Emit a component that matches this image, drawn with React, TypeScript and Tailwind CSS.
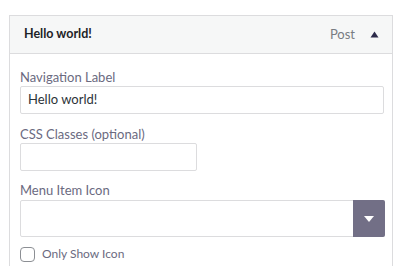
import React from "react";

export default function App() {
  return (
    <div className="w-[400px] h-[266px] bg-white overflow-hidden pt-[15px] pl-[9px]" style={{ fontFamily: "Lato, 'Noto Sans', sans-serif" }}>
      <div className="w-[384px] border border-[#dcdcde] border-b-0">
        <div className="h-[38px] bg-[#f6f7f7] border-b border-[#dcdcde] flex items-center pl-[14px] pr-[12px]">
          <span className="text-[12.5px] font-bold text-[#1d2327]">Hello world!</span>
          <span className="ml-auto text-[13px] text-[#787c82]">Post</span>
          <svg width="9" height="7" viewBox="0 0 9 7" className="ml-[15px] mr-[1px]">
            <path d="M4.5 0.5 L8.5 6.5 L0.5 6.5 Z" fill="#2c2a4a" />
          </svg>
        </div>
        <div className="pl-[10px] pr-[8px] pt-[15px] pb-[4px] flex flex-col">
          <label className="text-[13px] leading-[16px] text-[#6b6a7f]">Navigation Label</label>
          <div className="mt-[1px] h-[28px] w-[364px] border border-[#dcdcde] rounded-[2px] flex items-center pl-[7px] text-[13px] text-[#2c3338]">Hello world!</div>
          <label className="mt-[12px] text-[13px] leading-[16px] text-[#6b6a7f]">CSS Classes (optional)</label>
          <div className="mt-[1px] h-[28px] w-[177px] border border-[#dcdcde] rounded-[2px]"></div>
          <label className="mt-[11px] text-[13px] leading-[16px] text-[#6b6a7f]">Menu Item Icon</label>
          <div className="mt-[2px] h-[37px] w-[365px] border border-[#dcdcde] rounded-[2px] flex">
            <div className="flex-1"></div>
            <div className="w-[32px] -my-px -mr-px bg-[#726f86] flex items-center justify-center rounded-r-[2px]">
              <svg width="10" height="6" viewBox="0 0 10 6">
                <path d="M0 0 L10 0 L5 6 Z" fill="#ffffff" />
              </svg>
            </div>
          </div>
          <div className="mt-[8px] flex items-center">
            <div className="w-[15px] h-[15px] border border-[#8c8f94] rounded-[4px]"></div>
            <span className="ml-[7px] text-[12px] text-[#6b6a7f]">Only Show Icon</span>
          </div>
        </div>
      </div>
    </div>
  );
}
